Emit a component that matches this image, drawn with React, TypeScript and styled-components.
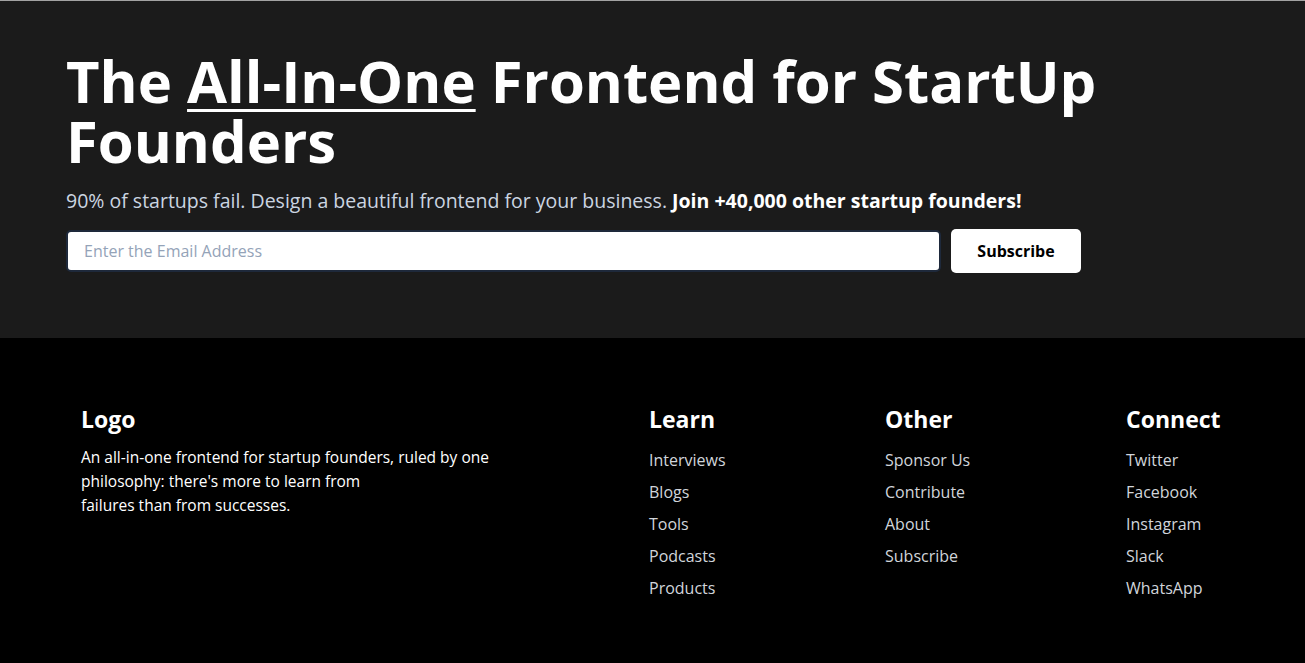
import React from "react";
import styled, { createGlobalStyle } from "styled-components";

const GlobalStyle = createGlobalStyle`
    html {
        overflow-y: scroll;
    }
    body {
        margin: 0;
        background: #000;
        font-family: "Open Sans", "Noto Sans", sans-serif;
    }
    * {
        box-sizing: border-box;
    }
`;

const Page = styled.div`
    border-top: 1px solid #a3a3a3;
`;

const Hero = styled.section`
    background-color: #1b1b1b;
    height: 337px;
    padding: 50px 66px 0;
`;

const Title = styled.h1`
    margin: 0;
    color: #fff;
    font-size: 58px;
    line-height: 60px;
    font-weight: 700;
    max-width: 1120px;
    u {
        text-decoration-thickness: 3px;
        text-underline-offset: 6px;
    }
`;

const Lead = styled.p`
    margin: 16px 0 0;
    color: #cbd5e1;
    font-size: 19.5px;
    line-height: 28px;
    b {
        color: #fff;
        font-weight: 700;
    }
`;

const Form = styled.form`
    display: flex;
    gap: 10px;
    margin-top: 14px;
    align-items: center;
`;

const EmailInput = styled.input`
    width: 875px;
    height: 42px;
    border: 2px solid #1e293b;
    border-radius: 5px;
    padding: 0 16px;
    font-family: inherit;
    font-size: 16px;
    color: #111;
    background: #fff;
    outline: none;
    &::placeholder {
        color: #94a3b8;
    }
`;

const Button = styled.button`
    width: 130px;
    height: 44px;
    border: none;
    border-radius: 5px;
    background: #fff;
    color: #000;
    font-family: inherit;
    font-size: 16px;
    font-weight: 700;
    cursor: pointer;
`;

const Footer = styled.footer`
    background: #000;
    height: 325px;
    padding: 65px 0 0 81px;
    display: grid;
    grid-template-columns: 568px 236px 241px auto;
    align-items: start;
`;

const Heading = styled.h3`
    margin: 0;
    color: #fff;
    font-size: 23px;
    line-height: 32px;
    font-weight: 700;
`;

const About = styled.p`
    margin: 10px 0 0;
    max-width: 425px;
    color: #fff;
    font-size: 15.5px;
    line-height: 24px;
`;

const LinkList = styled.ul`
    list-style: none;
    margin: 13px 0 0;
    padding: 0;
    display: flex;
    flex-direction: column;
    gap: 8px;
`;

const FooterLink = styled.a`
    display: block;
    color: #d1d5db;
    font-size: 16px;
    line-height: 24px;
    text-decoration: none;
`;

const columns = [
    { title: "Learn", links: ["Interviews", "Blogs", "Tools", "Podcasts", "Products"] },
    { title: "Other", links: ["Sponsor Us", "Contribute", "About", "Subscribe"] },
    { title: "Connect", links: ["Twitter", "Facebook", "Instagram", "Slack", "WhatsApp"] },
];

export default function App() {
    return (
        <Page>
            <GlobalStyle />
            <Hero>
                <Title>
                    The <u>All-In-One</u> Frontend for StartUp
                    <br />
                    Founders
                </Title>
                <Lead>
                    90% of startups fail. Design a beautiful frontend for your business.{" "}
                    <b>Join +40,000 other startup founders!</b>
                </Lead>
                <Form onSubmit={e => e.preventDefault()}>
                    <EmailInput type="email" placeholder="Enter the Email Address" />
                    <Button type="submit">Subscribe</Button>
                </Form>
            </Hero>
            <Footer>
                <div>
                    <Heading>Logo</Heading>
                    <About>
                        An all-in-one frontend for startup founders, ruled by one philosophy: there's more to learn from
                        <br />
                        failures than from successes.
                    </About>
                </div>
                {columns.map(col => (
                    <div key={col.title}>
                        <Heading>{col.title}</Heading>
                        <LinkList>
                            {col.links.map(link => (
                                <li key={link}>
                                    <FooterLink href="#">{link}</FooterLink>
                                </li>
                            ))}
                        </LinkList>
                    </div>
                ))}
            </Footer>
        </Page>
    );
}
